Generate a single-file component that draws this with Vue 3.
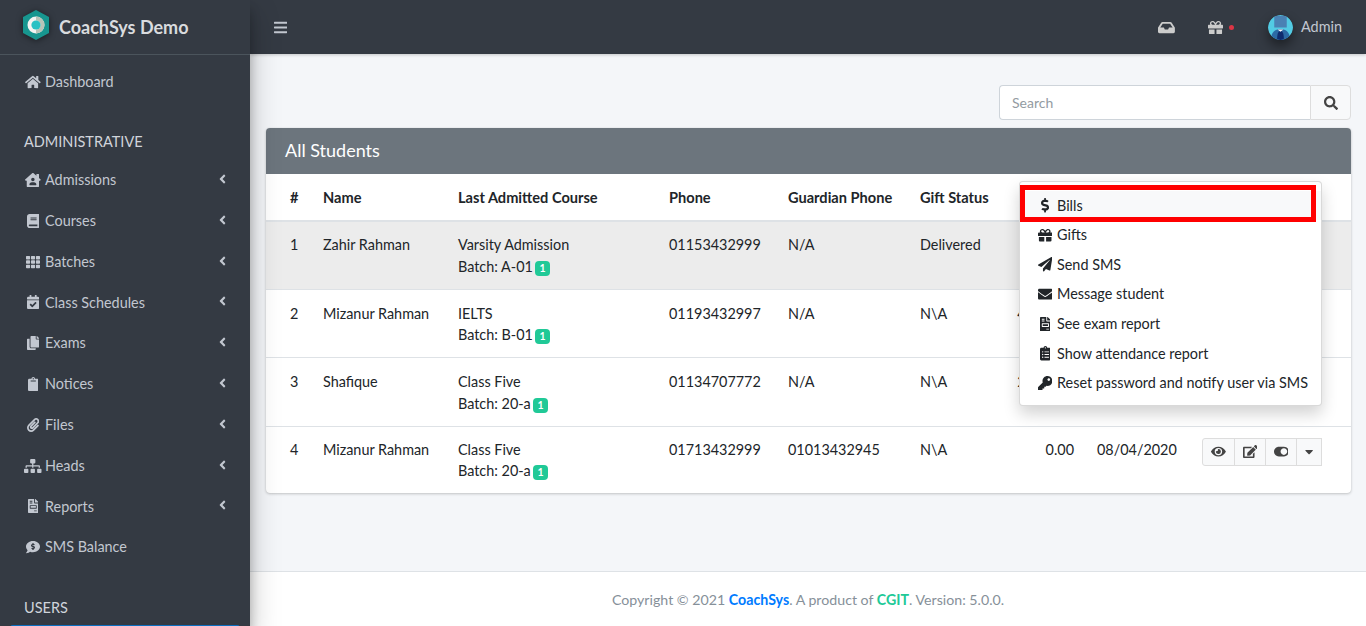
<script setup>
import { h } from 'vue';

const icons = {
  home: [576, 'M280.37 148.26L96 300.11V464a16 16 0 0 0 16 16l112.06-.29a16 16 0 0 0 15.92-16V368a16 16 0 0 1 16-16h64a16 16 0 0 1 16 16v95.64a16 16 0 0 0 16 16.05L464 480a16 16 0 0 0 16-16V300L295.67 148.26a12.19 12.19 0 0 0-15.3 0zM571.6 251.47L488 182.56V44.05a12 12 0 0 0-12-12h-56a12 12 0 0 0-12 12v72.61L318.47 43a48 48 0 0 0-61 0L4.34 251.47a12 12 0 0 0-1.6 16.9l25.5 31A12 12 0 0 0 45.15 301l235.22-193.74a12.19 12.19 0 0 1 15.3 0L530.9 301a12 12 0 0 0 16.9-1.6l25.5-31a12 12 0 0 0-1.7-16.93z'],
  search: [512, 'M505 442.7L405.3 343c-4.5-4.5-10.6-7-17-7H372c27.6-35.3 44-79.7 44-128C416 93.1 322.9 0 208 0S0 93.1 0 208s93.1 208 208 208c48.3 0 92.7-16.4 128-44v16.3c0 6.4 2.5 12.5 7 17l99.7 99.7c9.4 9.4 24.6 9.4 33.9 0l28.3-28.3c9.4-9.4 9.4-24.6.1-34zM208 336c-70.7 0-128-57.2-128-128 0-70.7 57.2-128 128-128 70.7 0 128 57.2 128 128 0 70.7-57.2 128-128 128z'],
  bars: [448, 'M16 132h416c8.837 0 16-7.163 16-16V76c0-8.837-7.163-16-16-16H16C7.163 60 0 67.163 0 76v40c0 8.837 7.163 16 16 16zm0 160h416c8.837 0 16-7.163 16-16v-40c0-8.837-7.163-16-16-16H16c-8.837 0-16 7.163-16 16v40c0 8.837 7.163 16 16 16zm0 160h416c8.837 0 16-7.163 16-16v-40c0-8.837-7.163-16-16-16H16c-8.837 0-16 7.163-16 16v40c0 8.837 7.163 16 16 16z'],
  inbox: [576, 'M567.938 243.908L462.25 85.374A48.003 48.003 0 0 0 422.311 64H153.689a48 48 0 0 0-39.938 21.374L8.062 243.908A47.994 47.994 0 0 0 0 270.533V400c0 26.51 21.49 48 48 48h480c26.51 0 48-21.49 48-48V270.533a47.994 47.994 0 0 0-8.062-26.625zM162.252 128h251.497l85.333 128H376l-32 64H232l-32-64H76.918l85.334-128z'],
  gift: [512, 'M32 448c0 17.7 14.3 32 32 32h160V320H32v128zm256 32h160c17.7 0 32-14.3 32-32V320H288v160zm192-320h-42.1c6.2-12.1 10.1-25.5 10.1-40 0-48.5-39.5-88-88-88-41.6 0-68.5 21.3-103 68.3-34.5-47-61.4-68.3-103-68.3-48.5 0-88 39.5-88 88 0 14.5 3.8 27.9 10.1 40H32c-17.7 0-32 14.3-32 32v80c0 8.8 7.2 16 16 16h480c8.8 0 16-7.2 16-16v-80c0-17.7-14.3-32-32-32zm-326.1 0c-22.1 0-40-17.9-40-40s17.9-40 40-40c19.9 0 34.6 3.3 86.1 80h-86.1zm206.1 0h-86.1c51.4-76.5 65.7-80 86.1-80 22.1 0 40 17.9 40 40s-17.9 40-40 40z'],
  th: [512, 'M149.333 56v80c0 13.255-10.745 24-24 24H24c-13.255 0-24-10.745-24-24V56c0-13.255 10.745-24 24-24h101.333c13.255 0 24 10.745 24 24zm181.334 240v-80c0-13.255-10.745-24-24-24H205.333c-13.255 0-24 10.745-24 24v80c0 13.255 10.745 24 24 24h101.333c13.256 0 24.001-10.745 24.001-24zm32-240v80c0 13.255 10.745 24 24 24H488c13.255 0 24-10.745 24-24V56c0-13.255-10.745-24-24-24H386.667c-13.255 0-24 10.745-24 24zm-32 80V56c0-13.255-10.745-24-24-24H205.333c-13.255 0-24 10.745-24 24v80c0 13.255 10.745 24 24 24h101.333c13.256 0 24.001-10.745 24.001-24zm-205.334 56H24c-13.255 0-24 10.745-24 24v80c0 13.255 10.745 24 24 24h101.333c13.255 0 24-10.745 24-24v-80c0-13.255-10.745-24-24-24zM0 376v80c0 13.255 10.745 24 24 24h101.333c13.255 0 24-10.745 24-24v-80c0-13.255-10.745-24-24-24H24c-13.255 0-24 10.745-24 24zm386.667-56H488c13.255 0 24-10.745 24-24v-80c0-13.255-10.745-24-24-24H386.667c-13.255 0-24 10.745-24 24v80c0 13.255 10.745 24 24 24zm0 160H488c13.255 0 24-10.745 24-24v-80c0-13.255-10.745-24-24-24H386.667c-13.255 0-24 10.745-24 24v80c0 13.255 10.745 24 24 24zM181.333 376v80c0 13.255 10.745 24 24 24h101.333c13.255 0 24-10.745 24-24v-80c0-13.255-10.745-24-24-24H205.333c-13.255 0-24 10.745-24 24z'],
  angle: [256, 'M31.7 239l136-136c9.4-9.4 24.6-9.4 33.9 0l22.6 22.6c9.4 9.4 9.4 24.6 0 33.9L127.9 256l96.4 96.4c9.4 9.4 9.4 24.6 0 33.9L201.7 409c-9.4 9.4-24.6 9.4-33.9 0l-136-136c-9.5-9.4-9.5-24.6-.1-34z'],
  eye: [576, 'M572.52 241.4C518.29 135.59 410.93 64 288 64S57.68 135.64 3.48 241.41a32.35 32.35 0 0 0 0 29.19C57.71 376.41 165.07 448 288 448s230.32-71.64 284.52-177.41a32.35 32.35 0 0 0 0-29.19zM288 400a144 144 0 1 1 144-144 143.93 143.93 0 0 1-144 144zm0-240a95.31 95.31 0 0 0-25.31 3.79 47.85 47.85 0 0 1-66.9 66.9A95.78 95.78 0 1 0 288 160z'],
  edit: [576, 'M402.6 83.2l90.2 90.2c3.8 3.8 3.8 10 0 13.8L274.4 405.6l-92.8 10.3c-12.4 1.4-22.9-9.1-21.5-21.5l10.3-92.8L388.8 83.2c3.8-3.8 10-3.8 13.8 0zm162-22.9l-48.8-48.8c-15.2-15.2-39.9-15.2-55.2 0l-35.4 35.4c-3.8 3.8-3.8 10 0 13.8l90.2 90.2c3.8 3.8 10 3.8 13.8 0l35.4-35.4c15.2-15.3 15.2-40 0-55.2zM384 346.2V448H64V128h229.8c3.2 0 6.2-1.3 8.5-3.5l40-40c7.6-7.6 2.2-20.5-8.5-20.5H48C21.5 64 0 85.5 0 112v352c0 26.5 21.5 48 48 48h352c26.5 0 48-21.5 48-48V306.2c0-10.7-12.9-16-20.5-8.5l-40 40c-2.2 2.3-3.5 5.3-3.5 8.5z'],
  toggle: [576, 'M384 64H192C86 64 0 150 0 256s86 192 192 192h192c106 0 192-86 192-192S490 64 384 64zm0 320c-70.8 0-128-57.3-128-128 0-70.8 57.3-128 128-128 70.8 0 128 57.3 128 128 0 70.8-57.3 128-128 128z'],
  caret: [320, 'M31.3 192h257.3c17.8 0 26.7 21.5 14.1 34.1L174.1 354.8c-7.8 7.8-20.5 7.8-28.3 0L17.2 226.1C4.6 213.5 13.5 192 31.3 192z'],
  dollar: [288, 'M209.2 233.4l-108-31.6C88.7 198.2 80 186.5 80 173.5c0-16.3 13.2-29.5 29.5-29.5h66.3c12.2 0 24.2 3.7 34.2 10.5 6.1 4.1 14.3 3.1 19.5-2l34.8-34c7.1-6.9 6.1-18.4-1.8-24.5C238 74.8 207.4 64.1 176 64V16c0-8.8-7.2-16-16-16h-32c-8.8 0-16 7.2-16 16v48h-2.5C45.8 64-5.4 118.7.5 183.6c4.2 46.1 39.4 83.6 83.8 96.6l102.5 30c12.5 3.7 21.2 15.3 21.2 28.3 0 16.3-13.2 29.5-29.5 29.5h-66.3C100 368 88 364.3 78 357.5c-6.1-4.1-14.3-3.1-19.5 2l-34.8 34c-7.1 6.9-6.1 18.4 1.8 24.5 24.5 19.2 55.1 29.9 86.5 30v48c0 8.8 7.2 16 16 16h32c8.8 0 16-7.2 16-16v-48.2c46.6-.9 90.3-28.6 105.7-72.7 21.5-61.6-14.6-124.8-72.5-141.7z'],
  plane: [512, 'M476 3.2L12.5 270.6c-18.1 10.4-15.8 35.6 2.2 43.2L121 358.4l287.3-253.2c5.5-4.9 13.3 2.6 8.6 8.3L176 407v80.5c0 23.6 28.5 32.9 42.5 15.8L282 426l124.6 52.2c14.2 6 30.4-2.9 33-18.2l72-432C515 7.8 493.3-6.8 476 3.2z'],
  envelope: [512, 'M502.3 190.8c3.9-3.1 9.7-.2 9.7 4.7V400c0 26.5-21.5 48-48 48H48c-26.5 0-48-21.5-48-48V195.6c0-5 5.7-7.8 9.7-4.7 22.4 17.4 52.1 39.5 154.1 113.6 21.1 15.4 56.7 47.8 92.2 47.6 35.7.3 72-32.8 92.3-47.6 102-74.1 131.6-96.3 154-113.7zM256 320c23.2.4 56.6-29.2 73.4-41.4 132.7-96.3 142.8-104.7 173.4-128.7 5.8-4.5 9.2-11.5 9.2-18.9v-19c0-26.5-21.5-48-48-48H48C21.5 64 0 85.5 0 112v19c0 7.4 3.4 14.3 9.2 18.9 30.6 23.9 40.7 32.4 173.4 128.7 16.8 12.2 50.2 41.8 73.4 41.4z'],
  invoice: [384, 'M288 256H96v64h192v-64zm89-151L279.1 7c-4.5-4.5-10.6-7-17-7H256v128h128v-6.1c0-6.3-2.5-12.4-7-16.9zm-153 31V0H24C10.7 0 0 10.7 0 24v464c0 13.3 10.7 24 24 24h336c13.3 0 24-10.7 24-24V160H248c-13.2 0-24-10.8-24-24zM64 72c0-4.42 3.58-8 8-8h80c4.42 0 8 3.58 8 8v16c0 4.42-3.58 8-8 8H72c-4.42 0-8-3.58-8-8V72zm0 64c0-4.42 3.58-8 8-8h80c4.42 0 8 3.58 8 8v16c0 4.42-3.58 8-8 8H72c-4.42 0-8-3.58-8-8v-16zm256 304c0 4.42-3.58 8-8 8h-80c-4.42 0-8-3.58-8-8v-16c0-4.42 3.58-8 8-8h80c4.42 0 8 3.58 8 8v16zm0-200v96c0 8.84-7.16 16-16 16H80c-8.84 0-16-7.16-16-16v-96c0-8.84 7.16-16 16-16h224c8.84 0 16 7.16 16 16z'],
  clipboardList: [384, 'M336 64h-80c0-35.3-28.7-64-64-64s-64 28.7-64 64H48C21.5 64 0 85.5 0 112v352c0 26.5 21.5 48 48 48h288c26.5 0 48-21.5 48-48V112c0-26.5-21.5-48-48-48zM96 424c-13.3 0-24-10.7-24-24s10.7-24 24-24 24 10.7 24 24-10.7 24-24 24zm0-96c-13.3 0-24-10.7-24-24s10.7-24 24-24 24 10.7 24 24-10.7 24-24 24zm0-96c-13.3 0-24-10.7-24-24s10.7-24 24-24 24 10.7 24 24-10.7 24-24 24zm96-192c13.3 0 24 10.7 24 24s-10.7 24-24 24-24-10.7-24-24 10.7-24 24-24zm128 368c0 4.4-3.6 8-8 8H168c-4.4 0-8-3.6-8-8v-16c0-4.4 3.6-8 8-8h144c4.4 0 8 3.6 8 8v16zm0-96c0 4.4-3.6 8-8 8H168c-4.4 0-8-3.6-8-8v-16c0-4.4 3.6-8 8-8h144c4.4 0 8 3.6 8 8v16zm0-96c0 4.4-3.6 8-8 8H168c-4.4 0-8-3.6-8-8v-16c0-4.4 3.6-8 8-8h144c4.4 0 8 3.6 8 8v16z'],
  clipboard: [384, 'M384 112v352c0 26.51-21.49 48-48 48H48c-26.51 0-48-21.49-48-48V112c0-26.51 21.49-48 48-48h80c0-35.29 28.71-64 64-64s64 28.71 64 64h80c26.51 0 48 21.49 48 48zM192 40c-13.255 0-24 10.745-24 24s10.745 24 24 24 24-10.745 24-24-10.745-24-24-24m96 114v-20a6 6 0 0 0-6-6H102a6 6 0 0 0-6 6v20a6 6 0 0 0 6 6h180a6 6 0 0 0 6-6z'],
  key: [512, 'M512 176.001C512 273.203 433.202 352 336 352c-11.22 0-22.19-1.062-32.827-3.069l-24.012 27.014A23.999 23.999 0 0 1 261.223 384H224v40c0 13.255-10.745 24-24 24h-40v40c0 13.255-10.745 24-24 24H24c-13.255 0-24-10.745-24-24v-78.059c0-6.365 2.529-12.47 7.029-16.971l161.802-161.802C163.108 213.814 160 195.271 160 176 160 78.798 238.797.001 335.999 0 433.488-.001 512 78.511 512 176.001zM336 128c0 26.51 21.49 48 48 48s48-21.49 48-48-21.49-48-48-48-48 21.49-48 48z'],
  paperclip: [448, 'M43.246 466.142c-58.43-60.289-57.341-157.511 1.386-217.581L254.392 34c44.316-45.332 116.351-45.336 160.671 0 43.89 44.894 43.943 117.329 0 162.276L232.214 383.128c-29.855 30.537-78.633 30.111-107.982-.998-28.275-29.97-27.368-77.473 1.452-106.953l143.743-146.835c6.182-6.314 16.312-6.422 22.626-.241l22.861 22.379c6.315 6.182 6.422 16.312.241 22.626L171.427 319.927c-4.932 5.045-5.236 13.428-.648 18.292 4.372 4.634 11.245 4.711 15.688.165l182.849-186.851c19.613-20.062 19.613-52.725-.011-72.798-19.189-19.627-49.957-19.637-69.154 0L90.39 293.295c-34.763 35.56-35.299 93.12-1.191 128.313 34.01 35.093 88.985 35.137 123.058.286l172.06-175.999c6.177-6.319 16.307-6.433 22.626-.256l22.877 22.364c6.319 6.177 6.434 16.307.256 22.626l-172.06 175.998c-59.576 60.938-155.943 60.216-214.77-.485z'],
  sitemap: [640, 'M128 352H32c-17.67 0-32 14.33-32 32v96c0 17.67 14.33 32 32 32h96c17.67 0 32-14.33 32-32v-96c0-17.67-14.33-32-32-32zm-24-80h192v48h48v-48h192v48h48v-57.59c0-21.17-17.23-38.41-38.41-38.41H344v-64h40c17.67 0 32-14.33 32-32V32c0-17.67-14.33-32-32-32H256c-17.67 0-32 14.33-32 32v96c0 17.67 14.33 32 32 32h40v64H94.41C73.23 224 56 241.23 56 262.41V320h48v-48zm264 80h-96c-17.67 0-32 14.33-32 32v96c0 17.67 14.33 32 32 32h96c17.67 0 32-14.33 32-32v-96c0-17.67-14.33-32-32-32zm240 0h-96c-17.67 0-32 14.33-32 32v96c0 17.67 14.33 32 32 32h96c17.67 0 32-14.33 32-32v-96c0-17.67-14.33-32-32-32z'],
  book: [448, 'M448 360V24c0-13.3-10.7-24-24-24H96C43 0 0 43 0 96v320c0 53 43 96 96 96h328c13.3 0 24-10.7 24-24v-16c0-7.5-3.5-14.3-8.9-18.7-4.2-15.4-4.2-59.3 0-74.7 5.4-4.3 8.9-11.1 8.9-18.6zM128 134c0-3.3 2.7-6 6-6h212c3.3 0 6 2.7 6 6v20c0 3.3-2.7 6-6 6H134c-3.3 0-6-2.7-6-6v-20zm0 64c0-3.3 2.7-6 6-6h212c3.3 0 6 2.7 6 6v20c0 3.3-2.7 6-6 6H134c-3.3 0-6-2.7-6-6v-20zm253.4 250H96c-17.7 0-32-14.3-32-32 0-17.6 14.4-32 32-32h285.4c-1.9 17.1-1.9 46.9 0 64z'],
  copy: [448, 'M320 448v40c0 13.255-10.745 24-24 24H24c-13.255 0-24-10.745-24-24V120c0-13.255 10.745-24 24-24h72v296c0 30.879 25.121 56 56 56h168zm0-344V0H152c-13.255 0-24 10.745-24 24v368c0 13.255 10.745 24 24 24h272c13.255 0 24-10.745 24-24V128H344c-13.2 0-24-10.8-24-24zm120.971-31.029L375.029 7.029A24 24 0 0 0 358.059 0H352v96h96v-6.059a24 24 0 0 0-7.029-16.97z'],
  calendar: [448, 'M436 160H12c-6.627 0-12-5.373-12-12v-36c0-26.51 21.49-48 48-48h48V12c0-6.627 5.373-12 12-12h40c6.627 0 12 5.373 12 12v52h128V12c0-6.627 5.373-12 12-12h40c6.627 0 12 5.373 12 12v52h48c26.51 0 48 21.49 48 48v36c0 6.627-5.373 12-12 12zM12 192h424c6.627 0 12 5.373 12 12v260c0 26.51-21.49 48-48 48H48c-26.51 0-48-21.49-48-48V204c0-6.627 5.373-12 12-12zm333.296 95.947l-28.169-28.398c-4.667-4.705-12.265-4.736-16.97-.068L194.12 364.665l-45.98-46.352c-4.667-4.705-12.266-4.736-16.971-.068l-28.397 28.17c-4.705 4.667-4.736 12.265-.068 16.97l82.601 83.269c4.667 4.705 12.265 4.736 16.97.068l142.953-141.805c4.705-4.667 4.736-12.265.068-16.97z'],
  house: [576, 'M570.69,236.27,512,184.44V48a16,16,0,0,0-16-16H432a16,16,0,0,0-16,16V99.67L314.78,10.3C308.5,4.61,296.53,0,288,0s-20.46,4.61-26.74,10.3l-256,226A18.27,18.27,0,0,0,0,248.2a18.64,18.64,0,0,0,4.09,10.71L25.5,282.7a21.14,21.14,0,0,0,12,5.3,21.67,21.67,0,0,0,10.69-4.11l15.9-14V480a32,32,0,0,0,32,32H480a32,32,0,0,0,32-32V269.88l15.91,14A21.94,21.94,0,0,0,538.63,288a20.89,20.89,0,0,0,11.87-5.31l21.41-23.81A21.64,21.64,0,0,0,576,248.19,21,21,0,0,0,570.69,236.27ZM288,176a64,64,0,1,1-64,64A64,64,0,0,1,288,176ZM400,448H176a16,16,0,0,1-16-16,96,96,0,0,1,96-96h64a96,96,0,0,1,96,96A16,16,0,0,1,400,448Z'],
  commentDollar: [512, 'M256 32C114.62 32 0 125.12 0 240c0 49.56 21.41 95.01 57.02 130.74C44.46 421.05 2.7 465.97 2.2 466.5A7.995 7.995 0 0 0 8 480c66.26 0 115.99-31.75 140.6-51.38C181.29 440.93 217.59 448 256 448c141.38 0 256-93.12 256-208S397.38 32 256 32zm24 302.44V352c0 8.84-7.16 16-16 16h-16c-8.84 0-16-7.16-16-16v-17.73c-11.42-1.35-22.28-5.19-31.78-11.46-6.22-4.11-6.82-13.11-1.55-18.38l17.52-17.52c3.74-3.74 9.31-4.24 14.11-2.03 3.18 1.46 6.66 2.22 10.26 2.22h32.78c4.66 0 8.44-3.78 8.44-8.42 0-3.75-2.52-7.08-6.12-8.11l-50.07-14.3c-22.25-6.35-40.01-24.71-42.91-47.67-4.05-32.07 19.03-59.43 49.32-63.05V128c0-8.84 7.16-16 16-16h16c8.84 0 16 7.16 16 16v17.73c11.42 1.35 22.28 5.19 31.78 11.46 6.22 4.11 6.82 13.11 1.55 18.38l-17.52 17.52c-3.74 3.74-9.31 4.24-14.11 2.03a24.516 24.516 0 0 0-10.26-2.22h-32.78c-4.66 0-8.44 3.78-8.44 8.42 0 3.75 2.52 7.08 6.12 8.11l50.07 14.3c22.25 6.36 40.01 24.71 42.91 47.67 4.05 32.06-19.03 59.42-49.32 63.04z'],
};

// small icon helper, height follows font-size
const Fa = (props) => h('svg', { viewBox: `0 0 ${icons[props.name][0]} 512`, class: 'fa', fill: 'currentColor' }, [
  h('path', { d: icons[props.name][1] }),
]);
Fa.props = ['name'];

const navItems = [
  { icon: 'house', label: 'Admissions' },
  { icon: 'book', label: 'Courses' },
  { icon: 'th', label: 'Batches' },
  { icon: 'calendar', label: 'Class Schedules' },
  { icon: 'copy', label: 'Exams' },
  { icon: 'clipboard', label: 'Notices' },
  { icon: 'paperclip', label: 'Files' },
  { icon: 'sitemap', label: 'Heads' },
  { icon: 'invoice', label: 'Reports' },
];

// the cells of rows 1-3 that the open menu covers stay empty
const students = [
  { id: 1, name: 'Zahir Rahman', course: 'Varsity Admission', batch: 'A-01', phone: '01153432999', guardian: 'N/A', gift: 'Delivered', amount: '', date: '', hover: true },
  { id: 2, name: 'Mizanur Rahman', course: 'IELTS', batch: 'B-01', phone: '01193432997', guardian: 'N/A', gift: 'N\\A', amount: '4,000.00', date: '' },
  { id: 3, name: 'Shafique', course: 'Class Five', batch: '20-a', phone: '01134707772', guardian: 'N/A', gift: 'N\\A', amount: '2,000.00', date: '' },
  { id: 4, name: 'Mizanur Rahman', course: 'Class Five', batch: '20-a', phone: '01713432999', guardian: '01013432945', gift: 'N\\A', amount: '0.00', date: '08/04/2020' },
];

const menu = [
  { icon: 'dollar', label: 'Bills' },
  { icon: 'gift', label: 'Gifts' },
  { icon: 'plane', label: 'Send SMS' },
  { icon: 'envelope', label: 'Message student' },
  { icon: 'invoice', label: 'See exam report' },
  { icon: 'clipboardList', label: 'Show attendance report' },
  { icon: 'key', label: 'Reset password and notify user via SMS' },
];
</script>

<template>
  <div class="wrapper">
    <aside class="sidebar">
      <div class="brand">
        <svg class="logo" viewBox="0 0 30 32">
          <polygon points="15,1 28,8 28,24 15,31 2,24 2,8" fill="#17968f" />
          <circle cx="15" cy="16" r="8.5" fill="#f2f4f2" />
          <path d="M15 7.5a8.5 8.5 0 0 1 0 17v-4a4.5 4.5 0 0 0 0-9z" fill="#b9c4b8" />
          <circle cx="15" cy="16" r="4.6" fill="#27c1c4" />
        </svg>
        <span class="brand-text">CoachSys Demo</span>
      </div>
      <nav class="nav">
        <a class="nav-item"><span class="nav-icon"><Fa name="home" /></span>Dashboard</a>
        <div class="nav-header">ADMINISTRATIVE</div>
        <a v-for="item in navItems" :key="item.label" class="nav-item">
          <span class="nav-icon"><Fa :name="item.icon" /></span>{{ item.label }}
          <Fa name="angle" class="nav-arrow" />
        </a>
        <a class="nav-item"><span class="nav-icon"><Fa name="commentDollar" /></span>SMS Balance</a>
        <div class="nav-header">USERS</div>
        <a class="nav-item active"></a>
      </nav>
    </aside>

    <div class="main">
      <header class="topbar">
        <Fa name="bars" class="menu-btn" />
        <div class="topbar-right">
          <Fa name="inbox" class="top-inbox" />
          <span class="top-gift"><Fa name="gift" /><i class="dot"></i></span>
          <svg class="avatar" viewBox="0 0 26 26">
            <circle cx="13" cy="13" r="13" fill="#52cbe4" />
            <path d="M6.5 0.9h13v12h-13z" fill="#4a82b4" />
            <path d="M3.5 22c1-5 5-7.5 9.5-7.5s8.500 2.500 9.500 7.500a13 13 0 0 1-19 0z" fill="#2c6aa5" />
            <path d="M9.500 25.500c0-5 1-9 3.500-9s3.500 4 3.500 9a13 13 0 0 1-7 0z" fill="#0f2c6e" />
            <path d="M10 15h6l-3 2.500z" fill="#fff" />
          </svg>
          <span class="user-name">Admin</span>
        </div>
      </header>

      <main class="content">
        <div class="search-row">
          <div class="search-box">
            <input class="search-input" type="text" placeholder="Search">
            <button class="search-btn"><Fa name="search" /></button>
          </div>
        </div>

        <section class="card">
          <div class="card-title">All Students</div>
          <table class="table">
            <colgroup>
              <col style="width: 45px">
              <col style="width: 135px">
              <col style="width: 211px">
              <col style="width: 119px">
              <col style="width: 132px">
              <col style="width: 97px">
              <col style="width: 80px">
              <col style="width: 105px">
              <col style="width: 161px">
            </colgroup>
            <thead>
              <tr>
                <th class="first">#</th>
                <th>Name</th>
                <th>Last Admitted Course</th>
                <th>Phone</th>
                <th>Guardian Phone</th>
                <th>Gift Status</th>
                <th></th>
                <th></th>
                <th></th>
              </tr>
            </thead>
            <tbody>
              <tr v-for="s in students" :key="s.id" :class="{ hover: s.hover }">
                <td class="first">{{ s.id }}</td>
                <td>{{ s.name }}</td>
                <td>
                  {{ s.course }}
                  <div class="batch">Batch: {{ s.batch }} <span class="badge">1</span></div>
                </td>
                <td>{{ s.phone }}</td>
                <td>{{ s.guardian }}</td>
                <td>{{ s.gift }}</td>
                <td class="amount">{{ s.amount }}</td>
                <td>{{ s.date }}</td>
                <td class="actions-cell">
                  <div class="btn-group">
                    <button class="btn w33"><Fa name="eye" /></button>
                    <button class="btn w32"><Fa name="edit" /></button>
                    <button class="btn w32"><Fa name="toggle" /></button>
                    <button class="btn w26"><Fa name="caret" /></button>
                  </div>
                </td>
              </tr>
            </tbody>
          </table>

          <div class="dropdown">
            <a v-for="(m, i) in menu" :key="m.label" class="dropdown-item" :class="{ focus: i === 0 }">
              <span class="dropdown-icon"><Fa :name="m.icon" /></span>{{ m.label }}
            </a>
            <div class="red-box"></div>
          </div>
        </section>
      </main>

      <footer class="footer">
        Copyright © 2021&nbsp;<b class="blue">CoachSys</b>. A product of&nbsp;<b class="green">CGIT</b>. Version: 5.0.0.
      </footer>
    </div>
  </div>
</template>

<style>
html, body {
  margin: 0;
  height: 100%;
  overflow: hidden;
}
</style>

<style scoped>
.wrapper {
  display: flex;
  height: 626px;
  overflow: hidden;
  font-family: Lato, "Liberation Sans", sans-serif;
  font-size: 14.4px;
  line-height: 21.6px;
  color: #212529;
  background: #f4f6f9;
}
.fa {
  height: 1em;
  display: block;
  flex: none;
}

/* sidebar */
.sidebar {
  width: 250px;
  flex: none;
  background: #343a43;
  color: #c2c7d0;
  box-shadow: 0 14px 28px rgba(0,0,0,.25), 0 10px 10px rgba(0,0,0,.22);
  z-index: 3;
  overflow: hidden;
}
.brand {
  height: 54px;
  border-bottom: 1px solid #4b545c;
  display: flex;
  align-items: center;
  padding-left: 21px;
}
.logo {
  width: 30px;
  height: 32px;
  margin-top: -4px;
  filter: drop-shadow(0 1px 3px rgba(0,0,0,.5));
}
.brand-text {
  margin-left: 8px;
  padding-top: 1px;
  font-size: 18px;
  font-weight: 700;
  color: #d9dbde;
}
.nav {
  padding-top: 6.4px;
}
.nav-item {
  height: 40.8px;
  display: flex;
  align-items: center;
  padding: 0 24px;
}
.nav-item.active {
  margin: 0 10px;
  background: #0b6fc2;
  border-radius: 3px;
}
.nav-icon {
  width: 18px;
  margin-right: 3px;
  display: flex;
  justify-content: center;
  font-size: 14px;
  color: #c2c7d0;
}
.nav-arrow {
  margin-left: auto;
  margin-top: -2px;
  font-size: 14px;
  color: #c2c7d0;
}
.nav-header {
  height: 57.4px;
  box-sizing: border-box;
  padding: 29px 24px 0;
  font-size: 14.5px;
  color: #d0d4db;
}

/* main column */
.main {
  flex: 1;
  min-width: 0;
  display: flex;
  flex-direction: column;
}
.topbar {
  height: 54px;
  flex: none;
  background: #343a43;
  color: #c2c7d0;
  display: flex;
  align-items: center;
  padding: 0 24px;
  font-size: 15px;
  box-shadow: 0 1px 3px rgba(0,0,0,.2);
}
.topbar-right {
  margin-left: auto;
  display: flex;
  align-items: center;
}
.top-inbox {
  font-size: 15px;
  color: #ccc;
}
.top-gift {
  display: flex;
  align-items: center;
  margin-left: 33px;
  color: #ccc;
}
.dot {
  width: 5px;
  height: 5px;
  border-radius: 50%;
  background: #dc3545;
  margin-left: 6px;
}
.avatar {
  width: 25px;
  height: 25px;
  margin-left: 34px;
  border-radius: 50%;
  box-shadow: 0 6px 12px rgba(0,0,0,.45);
}
.user-name {
  margin-left: 8px;
  font-size: 14.4px;
}
.content {
  flex: 1;
  padding: 31px 15px 0 16px;
}
.search-row {
  display: flex;
  justify-content: flex-end;
  margin-bottom: 8px;
}
.search-box {
  display: flex;
  width: 352px;
  height: 35px;
}
.search-input {
  flex: 1;
  min-width: 0;
  height: 35px;
  box-sizing: border-box;
  border: 1px solid #ced4da;
  border-right: 0;
  border-radius: 4px 0 0 4px;
  padding: 0 12px;
  font: 14px Lato, sans-serif;
  background: #fff;
  outline: none;
}
.search-input::placeholder {
  color: #939ba2;
}
.search-btn {
  width: 41px;
  height: 35px;
  padding: 0;
  border: 1px solid #ddd;
  border-radius: 0 4px 4px 0;
  background: #f8f9fa;
  color: #444;
  display: flex;
  align-items: center;
  justify-content: center;
  font-size: 14px;
}

/* card */
.card {
  position: relative;
  background: #fff;
  border-radius: 4px;
  box-shadow: 0 0 1px rgba(0,0,0,.125), 0 1px 3px rgba(0,0,0,.2);
}
.card-title {
  height: 46px;
  background: #6c757d;
  color: #fff;
  font-size: 18px;
  line-height: 45px;
  padding-left: 19px;
  border-radius: 4px 4px 0 0;
}
.table {
  width: 100%;
  table-layout: fixed;
  border-collapse: collapse;
}
th {
  height: 47px;
  box-sizing: border-box;
  padding: 2px 12px 0;
  text-align: left;
  font-size: 14.6px;
  font-weight: 700;
  border-bottom: 2px solid #dee2e6;
}
td {
  padding: 12px 12px 0;
  height: 68px;
  box-sizing: border-box;
  vertical-align: top;
  white-space: nowrap;
  border-top: 1px solid #dee2e6;
}
thead + tbody tr:first-child td {
  border-top: 0;
}
tbody tr:nth-child(2) td {
  padding-top: 13px;
}
tbody tr:nth-child(3) td {
  height: 69px;
  padding-top: 13.5px;
}
tbody tr:last-child td {
  height: 67px;
}
tr.hover td {
  background: #ececec;
}
.first {
  padding-left: 24px;
}
.batch {
  height: 21.6px;
}
.badge {
  display: inline-block;
  width: 15px;
  height: 15px;
  margin-left: -1.5px;
  border-radius: 4px;
  background: #20c997;
  color: #fff;
  font-size: 10.5px;
  font-weight: 700;
  line-height: 15px;
  text-align: center;
  vertical-align: 0;
}
td.amount {
  padding-left: 0;
  padding-right: 11px;
  text-align: right;
}
.btn-group {
  display: flex;
  width: 120px;
  height: 28px;
  margin-top: -1px;
}
.btn {
  height: 28px;
  padding: 0;
  margin-left: -1px;
  border: 1px solid #ddd;
  background: #f8f9fa;
  color: #444;
  display: flex;
  align-items: center;
  justify-content: center;
  font-size: 13.2px;
}
.btn:first-child {
  margin-left: 0;
  border-radius: 3px 0 0 3px;
}
.w33 { width: 33px; }
.w32 { width: 32px; }
.w26 { width: 26px; }

/* menu lies over the table */
.dropdown {
  position: absolute;
  left: 753px;
  top: 53px;
  width: 303px;
  box-sizing: border-box;
  padding: 8.6px 0 7.4px;
  background: #fff;
  border: 1px solid rgba(0,0,0,.15);
  border-radius: 4px;
  box-shadow: 0 8px 16px rgba(0,0,0,.175);
  z-index: 2;
}
.dropdown-item {
  height: 29.6px;
  display: flex;
  align-items: center;
  padding-left: 17px;
  color: #212529;
}
.dropdown-item.focus {
  background: #f8f9fa;
}
.dropdown-icon {
  width: 16px;
  margin-right: 4px;
  display: flex;
  justify-content: center;
}
.red-box {
  position: absolute;
  left: 0;
  top: 2.5px;
  width: 295.5px;
  height: 37px;
  box-sizing: border-box;
  border: 5px solid #f00;
}

.footer {
  height: 55px;
  flex: none;
  box-sizing: border-box;
  padding-top: 2px;
  background: #fff;
  border-top: 1px solid #dee2e6;
  display: flex;
  align-items: center;
  justify-content: center;
  font-size: 14.2px;
  color: #869099;
}
.blue { color: #007bff; }
.green { color: #20c997; }
</style>
